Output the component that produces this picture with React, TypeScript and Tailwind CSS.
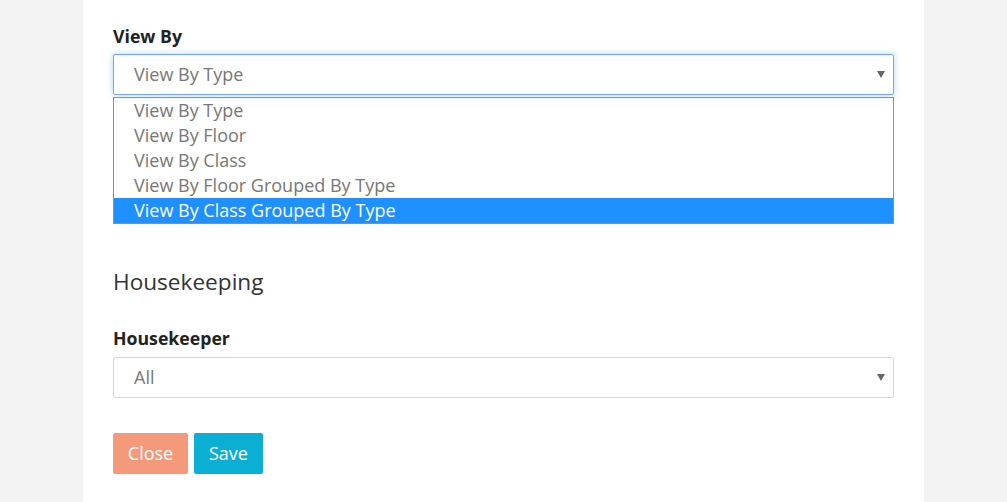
const viewOptions = [
  'View By Type',
  'View By Floor',
  'View By Class',
  'View By Floor Grouped By Type',
  'View By Class Grouped By Type',
]

export default function App() {
  return (
    <div className="min-h-[502px] bg-[#f3f3f3] font-['Open_Sans',sans-serif]">
      <div className="mx-auto w-[841px] min-h-[502px] bg-white px-[30px] pt-[25px]">
        {/* view by */}
        <label className="block text-[17.7px] font-bold leading-[22px] text-[#222]">View By</label>
        <div className="mt-[7px]">
          <SelectBox value="View By Type" focused />
          <ul className="mt-[2px] border border-[#7f8fb0]">
            {viewOptions.map((o, i) => (
              <li
                key={o}
                className={`h-[25px] pl-[20px] text-[18px] leading-[25px] ${
                  i === viewOptions.length - 1 ? 'bg-[#1e90ff] text-white' : 'text-[#777]'
                }`}
              >
                {o}
              </li>
            ))}
          </ul>
        </div>

        {/* housekeeping */}
        <h3 className="mt-[43px] text-[22.6px] font-normal leading-[30px] text-[#333]">Housekeeping</h3>
        <label className="mt-[30px] block text-[17.7px] font-bold leading-[22px] text-[#222]">Housekeeper</label>
        <div className="mt-[8px]">
          <SelectBox value="All" />
        </div>

        <div className="mt-[35px] flex gap-[6px]">
          <button className="h-[41px] w-[75px] rounded-[2px] bg-[#f4997a] text-[18px] text-white">Close</button>
          <button className="h-[41px] w-[69px] rounded-[2px] bg-[#0bafd3] text-[18px] text-white">Save</button>
        </div>
      </div>
    </div>
  )
}

function SelectBox({ value, focused }: { value: string; focused?: boolean }) {
  return (
    <div
      className={`flex h-[41px] items-center justify-between rounded-[2px] border pl-[20px] pr-[8px] ${
        focused
          ? 'border-[#66afe9] shadow-[0_0_6px_rgba(102,175,233,0.5)]'
          : 'border-[#d6d6d6]'
      }`}
    >
      <span className="text-[18px] text-[#777]">{value}</span>
      <svg width="8" height="7" viewBox="0 0 8 7" className="text-[#666]">
        <path d="M0 0H8L4 7Z" fill="currentColor" />
      </svg>
    </div>
  )
}
